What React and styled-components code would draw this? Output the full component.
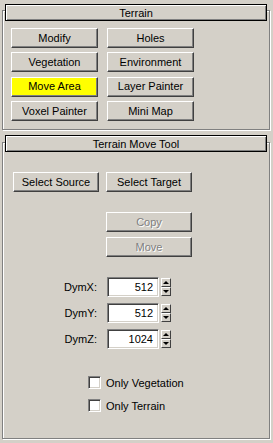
import React from 'react'
import styled, { createGlobalStyle } from 'styled-components'

const Global = createGlobalStyle`
  html, body {
    margin: 0;
    padding: 0;
    background: #D4D0C8;
  }
  body {
    font-family: "Liberation Sans", Arial, sans-serif;
    font-size: 11px;
    color: #000;
  }
`

const Page = styled.div`
  width: 273px;
  height: 443px;
  background: #D4D0C8;
  padding-top: 10px;
  box-sizing: border-box;
  overflow: hidden;
`

const GroupBox = styled.section`
  margin: ${p => p.$top || 0}px 3px 0 2px;
  border: 1px solid #808080;
  box-shadow: inset 1px 1px #fff, 1px 1px #fff;
  padding: 0 2px ${p => p.$bottom || 8}px 2px;
  height: ${p => (p.$height ? p.$height + 'px' : 'auto')};
  box-sizing: border-box;
`

const TitleBar = styled.div`
  height: 17px;
  margin-top: ${p => p.$pull || -7}px;
  border: 1px solid #000;
  box-shadow: inset 1px 1px #fff, inset -1px -1px #808080;
  background: #D4D0C8;
  display: flex;
  align-items: center;
  justify-content: center;
  box-sizing: border-box;
`

const ButtonGrid = styled.div`
  display: grid;
  grid-template-columns: 87px 87px;
  grid-auto-rows: 20px;
  column-gap: 9px;
  row-gap: 4.4px;
  padding: 7px 0 0 6px;
`

const Button = styled.div`
  height: 20px;
  width: ${p => p.$width || 'auto'};
  box-sizing: border-box;
  border: 1px solid;
  border-color: #fff #404040 #404040 #fff;
  box-shadow: inset -1px -1px #808080;
  background: ${p => (p.$active ? '#FFFF00' : '#D4D0C8')};
  color: ${p => (p.$disabled ? '#808080' : '#000')};
  text-shadow: ${p => (p.$disabled ? '1px 1px #fff' : 'none')};
  display: flex;
  align-items: center;
  justify-content: center;
  padding-bottom: 1px;
  white-space: nowrap;
`

const Row = styled.div`
  display: flex;
  gap: ${p => p.$gap || 0}px;
  margin-top: ${p => p.$top || 0}px;
  padding-left: ${p => p.$left || 0}px;
  align-items: center;
`

const Label = styled.span`
  width: 84px;
  text-align: right;
  margin-right: 10px;
`

const Field = styled.div`
  width: 52px;
  height: 20px;
  box-sizing: border-box;
  background: #fff;
  border: 1px solid;
  border-color: #808080 #fff #fff #808080;
  box-shadow: inset 1px 1px #404040, inset -1px -1px #D4D0C8;
  display: flex;
  align-items: center;
  justify-content: flex-end;
  padding-right: 5px;
`

const Spin = styled.div`
  display: flex;
  flex-direction: column;
  margin-left: 2px;
`

const SpinButton = styled.div`
  width: 10px;
  height: 9px;
  box-sizing: border-box;
  border: 1px solid;
  border-color: #fff #404040 #404040 #fff;
  background: #D4D0C8;
  display: flex;
  align-items: center;
  justify-content: center;

  &::after {
    content: '';
    border-left: 3px solid transparent;
    border-right: 3px solid transparent;
    ${p => (p.$down ? 'border-top: 3px solid #000;' : 'border-bottom: 3px solid #000;')}
  }
`

const Check = styled.div`
  width: 13px;
  height: 13px;
  box-sizing: border-box;
  background: #fff;
  border: 1px solid;
  border-color: #808080 #fff #fff #808080;
  box-shadow: inset 1px 1px #404040, inset -1px -1px #D4D0C8;
  margin-right: 5px;
`

const terrainButtons = [
  { name: 'Modify' },
  { name: 'Holes' },
  { name: 'Vegetation' },
  { name: 'Environment' },
  { name: 'Move Area', active: true },
  { name: 'Layer Painter' },
  { name: 'Voxel Painter' },
  { name: 'Mini Map' },
]

const dims = [
  { label: 'DymX:', value: 512 },
  { label: 'DymY:', value: 512 },
  { label: 'DymZ:', value: 1024 },
]

function NumberField({ label, value, top }) {
  return (
    <Row $top={top} $left={8}>
      <Label>{label}</Label>
      <Field>{value}</Field>
      <Spin>
        <SpinButton />
        <SpinButton $down />
      </Spin>
    </Row>
  )
}

export default function App() {
  return (
    <Page>
      <Global />
      <GroupBox>
        <TitleBar>Terrain</TitleBar>
        <ButtonGrid>
          {terrainButtons.map(b => (
            <Button key={b.name} $active={b.active}>{b.name}</Button>
          ))}
        </ButtonGrid>
      </GroupBox>

      <GroupBox $top={12} $height={297}>
        <TitleBar $pull={-8}>Terrain Move Tool</TitleBar>
        <Row $top={20} $left={8} $gap={7}>
          <Button $width="86px">Select Source</Button>
          <Button $width="86px">Select Target</Button>
        </Row>
        <Row $top={20} $left={101}>
          <Button $width="86px" $disabled>Copy</Button>
        </Row>
        <Row $top={5} $left={101}>
          <Button $width="86px" $disabled>Move</Button>
        </Row>
        {dims.map((d, i) => (
          <NumberField key={d.label} label={d.label} value={d.value} top={i === 0 ? 20 : 6} />
        ))}
        <Row $top={27} $left={83}>
          <Check />
          Only Vegetation
        </Row>
        <Row $top={10} $left={83}>
          <Check />
          Only Terrain
        </Row>
      </GroupBox>
    </Page>
  )
}
